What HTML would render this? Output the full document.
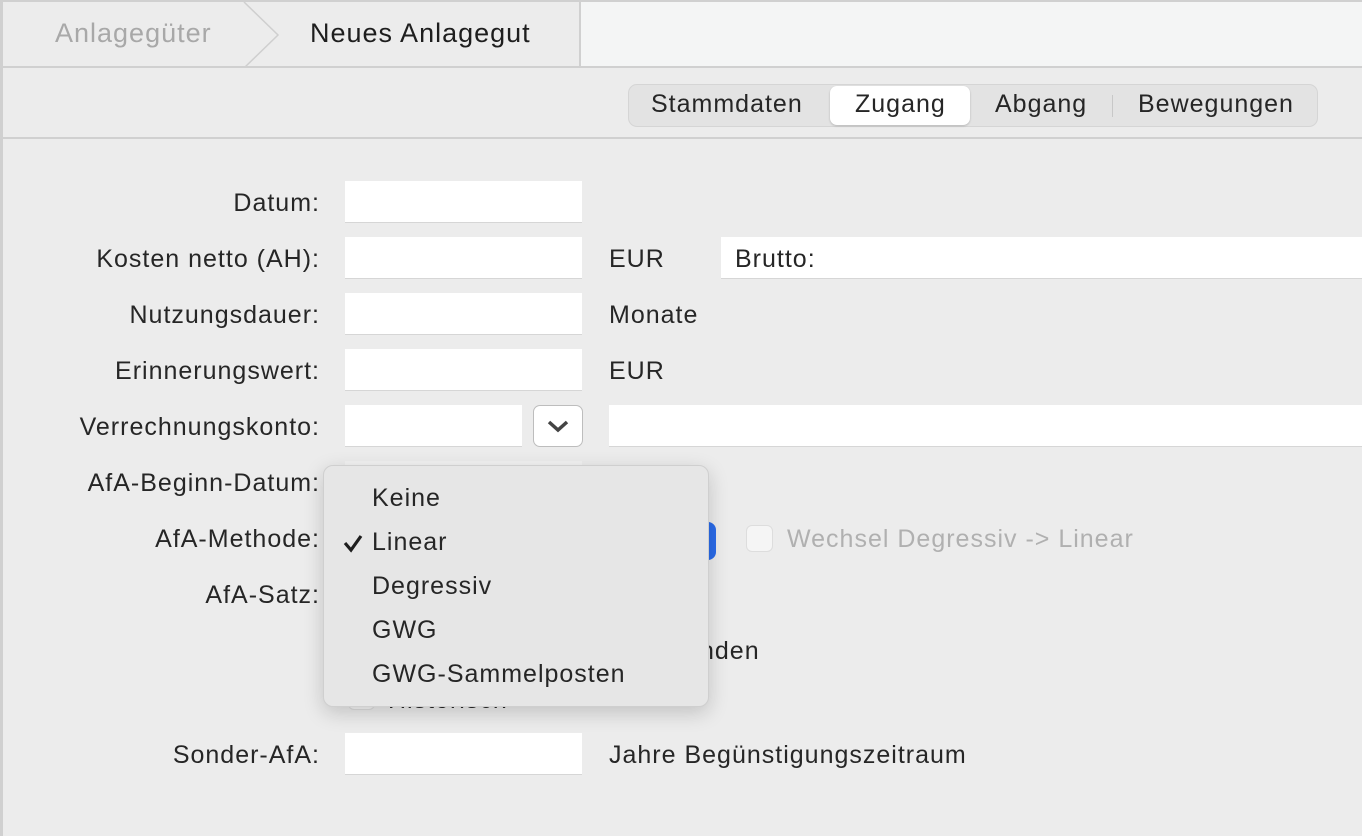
<!DOCTYPE html>
<html><head><meta charset="utf-8"><style>
*{box-sizing:border-box;margin:0;padding:0}
body{width:1362px;height:836px;background:#ececec;font-family:"Liberation Sans",sans-serif;font-size:25px;letter-spacing:1px;color:#262626;position:relative;overflow:hidden}
.a{position:absolute}
.lbl{position:absolute;right:1042px;text-align:right;white-space:nowrap}
.f{position:absolute;background:#fff;border-bottom:1px solid #d6d6d6;height:42px}
.t{position:absolute;white-space:nowrap}
</style></head><body>
<div class="a" style="left:0;top:0;width:3px;height:836px;background:#d0d0d0"></div>
<div class="a" style="left:3px;top:0;width:1359px;height:2px;background:#d0d0d0"></div>
<div class="a" style="left:579px;top:2px;width:783px;height:65px;background:#f4f5f5;border-left:2px solid #d0d0d0"></div>
<svg class="a" style="left:240px;top:2px" width="40" height="66"><polyline points="4,0 38,33 4,66" fill="none" stroke="#cfcfcf" stroke-width="1.5"/></svg>
<div class="t" style="left:55px;top:18px;font-size:27px;color:#a8a8a8">Anlagegüter</div>
<div class="t" style="left:310px;top:18px;font-size:27px;color:#1e1e1e">Neues Anlagegut</div>
<div class="a" style="left:3px;top:66px;width:1359px;height:2px;background:#d0d0d0"></div>
<div class="a" style="left:3px;top:137px;width:1359px;height:2px;background:#d0d0d0"></div>
<div class="a" style="left:628px;top:84px;width:690px;height:43px;background:#e3e3e3;border:1px solid #d5d5d5;border-radius:9px"></div>
<div class="a" style="left:830px;top:86px;width:140px;height:39px;background:#fff;border-radius:7px;box-shadow:0 1px 2px rgba(0,0,0,.2)"></div>
<div class="a" style="left:1112px;top:95px;width:1px;height:22px;background:#c8c8c8"></div>
<div class="t" style="left:651px;top:90px">Stammdaten</div>
<div class="t" style="left:855px;top:90px">Zugang</div>
<div class="t" style="left:995px;top:90px">Abgang</div>
<div class="t" style="left:1138px;top:90px">Bewegungen</div>

<div class="lbl" style="top:189px">Datum:</div>
<div class="lbl" style="top:245px">Kosten netto (AH):</div>
<div class="lbl" style="top:301px">Nutzungsdauer:</div>
<div class="lbl" style="top:357px">Erinnerungswert:</div>
<div class="lbl" style="top:413px">Verrechnungskonto:</div>
<div class="lbl" style="top:469px">AfA-Beginn-Datum:</div>
<div class="lbl" style="top:525px">AfA-Methode:</div>
<div class="lbl" style="top:581px">AfA-Satz:</div>
<div class="lbl" style="top:741px">Sonder-AfA:</div>

<div class="f" style="left:345px;top:181px;width:237px"></div>
<div class="f" style="left:345px;top:237px;width:237px"></div>
<div class="f" style="left:345px;top:293px;width:237px"></div>
<div class="f" style="left:345px;top:349px;width:237px"></div>
<div class="f" style="left:345px;top:405px;width:177px"></div>
<div class="f" style="left:345px;top:461px;width:237px;background:#f2f2f2"></div>
<div class="f" style="left:345px;top:733px;width:237px"></div>
<div class="f" style="left:721px;top:237px;width:641px"></div>
<div class="f" style="left:609px;top:405px;width:753px"></div>
<div class="a" style="left:533px;top:405px;width:50px;height:42px;background:#fff;border:1px solid #bdbdbd;border-radius:7px"></div>
<svg class="a" style="left:546px;top:418px" width="24" height="16"><polyline points="3,4 12,12 21,4" fill="none" stroke="#444" stroke-width="3.5"/></svg>
<div class="t" style="left:609px;top:245px">EUR</div>
<div class="t" style="left:735px;top:245px">Brutto:</div>
<div class="t" style="left:609px;top:301px">Monate</div>
<div class="t" style="left:609px;top:357px">EUR</div>
<div class="t" style="left:609px;top:741px">Jahre Begünstigungszeitraum</div>
<div class="a" style="left:690px;top:522px;width:26px;height:38px;background:#2a6bea;border-radius:8px"></div>
<div class="a" style="left:746px;top:525px;width:27px;height:27px;background:#f5f5f5;border:1px solid #ddd;border-radius:6px"></div>
<div class="t" style="left:787px;top:525px;color:#b0b0b0">Wechsel Degressiv -&gt; Linear</div>
<div class="t" style="left:700px;top:637px">nden</div>
<div class="a" style="left:348px;top:690px;width:27px;height:20px;background:#f5f5f5;border:1px solid #ddd;border-radius:6px"></div>
<div class="t" style="left:388px;top:686px">Historisch</div>

<div class="a" style="left:323px;top:465px;width:386px;height:242px;background:#e6e6e6;border:1px solid #cfcfcf;border-radius:10px;box-shadow:0 6px 20px rgba(0,0,0,.18)"></div>
<div class="t" style="left:372px;top:484px">Keine</div>
<svg class="a" style="left:342px;top:533px" width="22" height="20"><polyline points="3,10 9,17 19,3" fill="none" stroke="#1e1e1e" stroke-width="3.2"/></svg>
<div class="t" style="left:372px;top:528px">Linear</div>
<div class="t" style="left:372px;top:572px">Degressiv</div>
<div class="t" style="left:372px;top:616px">GWG</div>
<div class="t" style="left:372px;top:660px">GWG-Sammelposten</div>
</body></html>
